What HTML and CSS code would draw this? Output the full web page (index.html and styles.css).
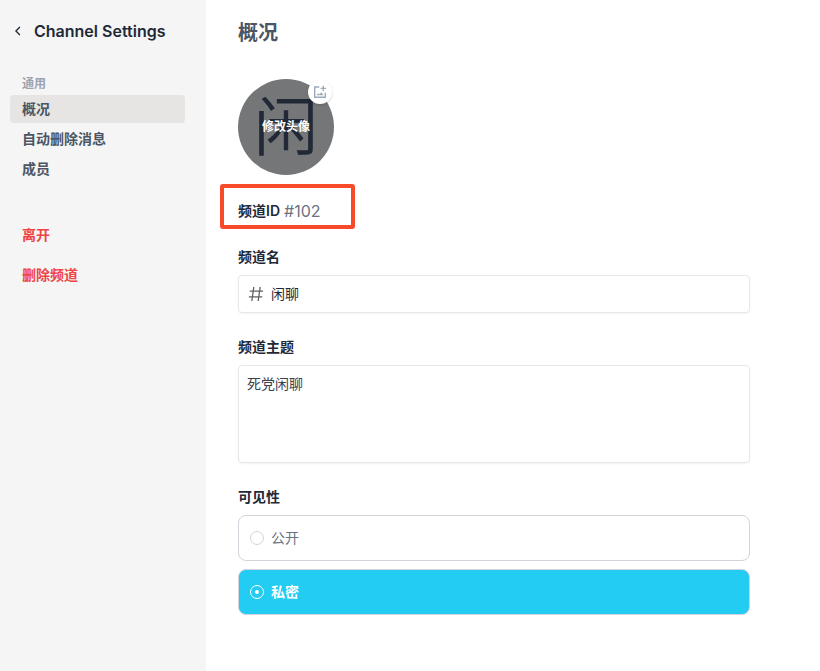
FILE: index.html
```html
<!DOCTYPE html>
<html lang="zh-CN">
<head>
<meta charset="utf-8">
<title>Channel Settings</title>
<link rel="stylesheet" href="styles.css">
</head>
<body>
<div class="layout">
  <aside class="sidebar">
    <header class="sidebar-title">
      <svg class="back" viewBox="0 0 16 16" fill="none" stroke="#1f2937" stroke-width="1.3"><path d="M9.9 4 5.9 8l4 4"/></svg>
      <h1>Channel Settings</h1>
    </header>
    <h2 class="group">通用</h2>
    <nav class="nav">
      <a class="item active">概况</a>
      <a class="item">自动删除消息</a>
      <a class="item">成员</a>
    </nav>
    <div class="danger">
      <a class="item">离开</a>
      <a class="item">删除频道</a>
    </div>
  </aside>
  <main class="content">
    <h2 class="page-title">概况</h2>
    <div class="avatar">
      <span class="avatar-char">闲</span>
      <span class="avatar-tip">修改头像</span>
      <span class="avatar-badge">
        <svg viewBox="0 0 14 14" fill="none" stroke="#9aaab9" stroke-width="1.4"><path d="M6.2 2H1.7v10.2h10.6V7.8"/><path d="M10.3 0.7v5.4M7.6 3.4h5.4"/><path d="M3.5 10.3 5.2 8.2l1.2 1.2 1.9-2.2 2.2 3.1z" fill="#9aaab9" stroke="none"/></svg>
      </span>
    </div>
    <div class="channel-id"><b>频道ID</b> <span>#102</span><i class="highlight"></i></div>
    <section class="field">
      <h3>频道名</h3>
      <div class="input">
        <svg class="hash" viewBox="0 0 16 16" fill="none" stroke="#616161" stroke-width="1.3"><path d="M5.8 1 3.8 15M12.2 1l-2 14M1.7 5.2h13.4M.9 10.8h13.4"/></svg>
        <span>闲聊</span>
      </div>
    </section>
    <section class="field">
      <h3>频道主题</h3>
      <div class="textarea">死党闲聊</div>
    </section>
    <section class="field">
      <h3>可见性</h3>
      <div class="options">
        <div class="option"><span class="radio"></span>公开</div>
        <div class="option selected"><span class="radio"></span>私密</div>
      </div>
    </section>
  </main>
</div>
</body>
</html>
```
FILE: styles.css
```css
* { box-sizing: border-box; margin: 0; }
body {
  font: 14px/20px Inter, "Noto Sans CJK SC", sans-serif;
  color: #1f2937;
  background: #fff;
}
.layout { display: flex; min-height: 671px; }
.sidebar { width: 206px; flex: none; background: #f5f5f5; padding: 19px 21px 0 10px; }
.sidebar-title { display: flex; align-items: center; gap: 8px; height: 24px; white-space: nowrap; }
.sidebar-title h1 { font-size: 16px; line-height: 24px; font-weight: 600; }
.back { width: 16px; height: 16px; flex: none; }
.group { margin-top: 32px; padding-left: 12px; font-size: 12px; line-height: 18px; font-weight: 700; color: #9ca3af; }
.nav { display: flex; flex-direction: column; gap: 2px; margin-top: 2px; }
.item { display: block; padding: 4px 12px; border-radius: 4px; font-weight: 700; color: #4b5563; }
.item.active { background: #e7e5e4; }
.danger { display: flex; flex-direction: column; gap: 12px; margin-top: 38px; }
.danger .item { color: #ef4444; }
.content { width: 544px; padding: 19px 0 0 32px; }
.page-title { font-size: 20px; line-height: 28px; font-weight: 700; color: #4b5563; }
.avatar {
  position: relative;
  display: grid;
  place-items: center;
  width: 96px;
  height: 96px;
  margin-top: 32px;
  border-radius: 50%;
  background: #757677;
}
.avatar > * { grid-area: 1 / 1; }
.avatar-char { font-size: 64px; line-height: 96px; color: #212936; }
.avatar-tip { z-index: 1; font-size: 12px; font-weight: 700; color: #fff; }
.avatar-badge {
  position: absolute;
  z-index: 2;
  top: 1px;
  right: 2px;
  display: grid;
  place-items: center;
  width: 24px;
  height: 24px;
  border-radius: 50%;
  background: #fff;
  box-shadow: 0 1px 3px rgba(0, 0, 0, .15);
}
.avatar-badge svg { width: 14px; height: 14px; }
.channel-id { position: relative; display: flex; align-items: center; gap: 4px; height: 24px; margin-top: 24px; }
.channel-id b { font-weight: 600; }
.channel-id span { font-size: 16px; color: #6b7280; }
.highlight { position: absolute; left: -18px; top: -15px; width: 135px; height: 45px; border: 4px solid #f64a29; border-radius: 3px; }
.field { margin-top: 24px; }
.field h3 { margin-bottom: 8px; font-size: 14px; line-height: 20px; font-weight: 700; }
.input, .textarea { border: 1px solid #e5e7eb; border-radius: 4px; box-shadow: 0 1px 2px rgba(0, 0, 0, .05); }
.input { display: flex; align-items: center; gap: 7px; height: 38px; padding: 0 9px; }
.hash { width: 16px; height: 16px; }
.textarea { height: 98px; padding: 8px; color: #374151; }
.options { display: flex; flex-direction: column; gap: 8px; }
.option {
  display: flex;
  align-items: center;
  gap: 7px;
  height: 46px;
  padding: 0 11px;
  border: 1px solid #d1d5db;
  border-radius: 8px;
  color: #6b7280;
}
.option.selected { background: #22ccf2; color: #fff; font-weight: 700; }
.radio { display: grid; place-items: center; width: 14px; height: 14px; border: 1px solid #d1d5db; border-radius: 50%; }
.selected .radio { border: 1.5px solid #fff; }
.selected .radio::after { content: ""; width: 4px; height: 4px; border-radius: 50%; background: #fff; }
```
